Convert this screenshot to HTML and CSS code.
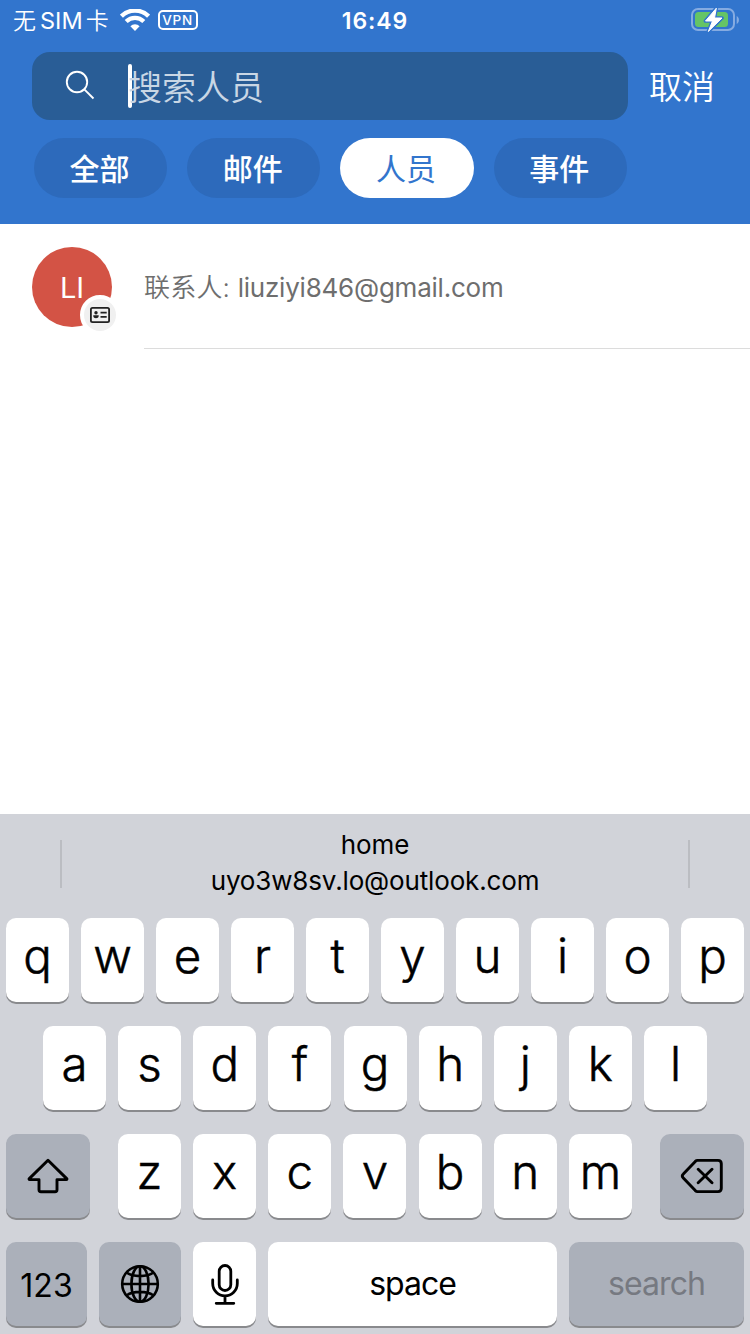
FILE: index.html
```html
<!DOCTYPE html>
<html lang="zh-CN">
<head>
<meta charset="utf-8">
<title>搜索人员</title>
<link rel="stylesheet" href="styles.css">
</head>
<body>
<div class="screen">
  <header class="header">
    <div class="status">
      <div class="status-left">
        <span class="carrier">无<span class="sim">SIM</span>卡</span>
        <svg class="wifi" width="30" height="22" viewBox="0 0 30 22">
          <path d="M1.400 7.200a19.300 19.300 0 0 1 27.200 0" fill="none" stroke="#fff" stroke-width="4.400"/>
          <path d="M6.200 12.500a12.500 12.500 0 0 1 17.600 0" fill="none" stroke="#fff" stroke-width="4.200"/>
          <path d="M15 22l-4.600-4.800a6.500 6.500 0 0 1 9.200 0z" fill="#fff"/>
        </svg>
        <span class="vpn">VPN</span>
      </div>
      <span class="time">16:49</span>
      <svg class="battery" width="50" height="26" viewBox="0 0 50 26">
        <rect x="2" y="2" width="42" height="21" rx="6" fill="none" stroke="#85abe1" stroke-width="2"/>
        <path d="M46.700 9v8c3-1.500 3-6.500 0-8z" fill="#85abe1"/>
        <rect x="5" y="5" width="33" height="15" rx="3.500" fill="#65c466"/>
        <path d="M26.300 1.200 15.500 14h7L18.300 24.500 32 11h-7.500z" fill="#fff" stroke="#3275cd" stroke-width="3.600" stroke-linejoin="round"/>
        <path d="M26.300 1.200 15.500 14h7L18.300 24.500 32 11h-7.500z" fill="#fff" stroke="#fff" stroke-width="1" stroke-linejoin="round"/>
      </svg>
    </div>
    <div class="search-row">
      <div class="field">
        <svg class="lens" width="30" height="30" viewBox="0 0 30 30" fill="none" stroke="#fff" stroke-width="1.900">
          <circle cx="12" cy="12" r="10.200"/><path d="M19.300 19.300 28.500 28.500"/>
        </svg>
        <span class="caret"></span>
        <span class="placeholder">搜索人员</span>
      </div>
      <span class="cancel">取消</span>
    </div>
    <nav class="tabs">
      <span class="tab">全部</span>
      <span class="tab">邮件</span>
      <span class="tab tab-active">人员</span>
      <span class="tab">事件</span>
    </nav>
  </header>
  <main class="results">
    <div class="result">
      <div class="avatar">LI
        <span class="badge">
          <svg width="20" height="16" viewBox="0 0 20 16">
            <rect x=".9" y=".9" width="18.200" height="14.200" rx="1.600" fill="none" stroke="#212121" stroke-width="1.800"/>
            <circle cx="6" cy="5.700" r="1.700" fill="#212121"/>
            <path d="M3.300 8.300h5.400v.8c0 3-5.400 3-5.400 0zM10.500 4.800h6.200v1.800h-6.200zM10.500 9h6.200v1.800h-6.200z" fill="#212121"/>
          </svg>
        </span>
      </div>
      <div class="contact"><span class="contact-label">联系人: </span><span class="mail">liuziyi846@gmail.com</span></div>
    </div>
  </main>
  <section class="keyboard">
    <div class="suggestions">
      <span class="divider"></span>
      <div class="suggestion"><span class="sug-name">home</span><span class="sug-mail">uyo3w8sv.lo@outlook.com</span></div>
      <span class="divider"></span>
    </div>
    <div class="rows">
      <div class="row"><span class="key">q</span><span class="key">w</span><span class="key">e</span><span class="key">r</span><span class="key">t</span><span class="key">y</span><span class="key">u</span><span class="key">i</span><span class="key">o</span><span class="key">p</span></div>
      <div class="row row-inset"><span class="key">a</span><span class="key">s</span><span class="key">d</span><span class="key">f</span><span class="key">g</span><span class="key">h</span><span class="key">j</span><span class="key">k</span><span class="key">l</span></div>
      <div class="row">
        <span class="key key-dark key-mod">
          <svg width="42" height="36" viewBox="0 0 42 36" fill="none" stroke="#000" stroke-width="2.900" stroke-linejoin="round"><path d="M21 2.300 2.300 20.600c-.5.500-.3 1 .4 1h9.300v10.200q0 2 2 2h14q2 0 2-2V21.600h9.300c.7 0 .9-.5.4-1z"/></svg>
        </span>
        <div class="letters"><span class="key">z</span><span class="key">x</span><span class="key">c</span><span class="key">v</span><span class="key">b</span><span class="key">n</span><span class="key">m</span></div>
        <span class="key key-dark key-mod">
          <svg width="44" height="36" viewBox="0 0 44 36" fill="none" stroke="#000" stroke-width="2.900" stroke-linejoin="round" stroke-linecap="round"><path d="M17.500 2.400h20.500q3.300 0 3.300 3.300v24.600q0 3.300-3.300 3.300h-20.500q-1.200 0-2.200-1L3.300 20q-2-2 0-4L15.300 3.400q1-1 2.200-1zM18.200 11.300 32 24.700M32 11.300 18.200 24.700"/></svg>
        </span>
      </div>
      <div class="row">
        <span class="key key-dark key-num">123</span>
        <span class="key key-dark key-globe">
          <svg width="40" height="40" viewBox="0 0 40 40" fill="none" stroke="#000" stroke-width="2.600"><circle cx="20" cy="20" r="17.800"/><ellipse cx="20" cy="20" rx="8.600" ry="17.800"/><path d="M20 2v36M2 20h36M6.800 8.800C13 13.200 27 13.200 33.200 8.800M6.800 31.200C13 26.800 27 26.800 33.200 31.200"/></svg>
        </span>
        <span class="key">
          <svg width="28" height="42" viewBox="0 0 28 42" fill="none" stroke="#000" stroke-width="2.800" stroke-linecap="round"><rect x="8.200" y="2.500" width="11.600" height="25" rx="5.800"/><path d="M1.700 17v3.500a12.300 12.300 0 0 0 24.600 0V17M14 33v7.300M5.200 40.300h17.600"/></svg>
        </span>
        <span class="key key-space">space</span>
        <span class="key key-dark key-search">search</span>
      </div>
    </div>
  </section>
</div>
</body>
</html>
```
FILE: styles.css
```css
* { box-sizing: border-box; }
body { margin: 0; font-family: Inter, "Noto Sans CJK SC", sans-serif; }
.screen { width: 750px; height: 1334px; display: flex; flex-direction: column; background: #fff; overflow: hidden; }
.header { height: 224px; background: #3275cd; color: #fff; display: flex; flex-direction: column; }
.status { height: 40px; display: grid; grid-template-columns: 1fr auto 1fr; grid-template-rows: 40px; align-items: center; padding: 0 10px 0 13px; }
.status-left { display: flex; align-items: center; height: 40px; }
.carrier { font-size: 23px; line-height: 42px; height: 40px; font-weight: 350; display: flex; }
.sim { margin: 0 3px 0 4px; font-weight: 400; font-size: 23.500px; }
.wifi { margin-left: 11px; }
.vpn { margin-left: 8px; width: 40px; height: 20px; border: 2px solid #fff; border-radius: 5px; font-size: 13.500px; font-weight: 500; line-height: 16px; text-align: center; letter-spacing: .8px; }
.time { font-size: 23px; font-weight: 600; line-height: 42px; height: 40px; letter-spacing: .9px; margin-right: 3px; }
.battery { justify-self: end; }
.search-row { display: flex; align-items: center; margin-top: 12px; padding-left: 32px; }
.field { width: 596px; height: 68px; border-radius: 18px; background: #295d96; display: flex; align-items: center; padding-left: 33px; }
.lens { margin-bottom: 2px; }
.caret { width: 4px; height: 44px; border-radius: 2px; background: #fff; margin-left: 33px; }
.placeholder { font-size: 34px; line-height: 68px; font-weight: 350; color: #c9d7e5; margin: 3px 0 0 -4px; height: 68px; }
.cancel { font-size: 33px; line-height: 68px; height: 68px; margin: 1px 0 -1px 21px; font-weight: 350; }
.tabs { display: flex; gap: 20px; margin: 18px 0 0 34px; }
.tab { width: 133.200px; height: 60px; padding-right: 2px; border-radius: 30px; background: #2d6abb; font-size: 30px; line-height: 62px; font-weight: 500; text-align: center; }
.tab-active { background: #fff; color: #3275cd; font-weight: 400; }
.results { flex: 1; }
.result { display: flex; padding-left: 32px; height: 125px; }
.avatar { position: relative; width: 80px; height: 80px; margin-top: 23px; border-radius: 50%; background: #d35345; color: #fff; font-size: 29px; font-weight: 400; line-height: 81px; text-align: center; }
.badge { position: absolute; left: 48px; top: 48px; width: 40px; height: 40px; border: 4px solid #fff; border-radius: 50%; background: #f0f0f0; display: flex; align-items: center; justify-content: center; }
.contact { flex: 1; margin-left: 32px; border-bottom: 1px solid #dcdcdc; color: #6e6e6e; font-size: 26px; line-height: 127px; white-space: pre; }
.contact-label { font-weight: 350; letter-spacing: .2px; }
.mail { letter-spacing: -.22px; }
.keyboard { height: 520px; background: #d1d3d9; display: flex; flex-direction: column; }
.suggestions { height: 104px; display: flex; justify-content: space-between; align-items: flex-start; padding: 0 60px; }
.divider { width: 2px; height: 48px; margin-top: 26px; background: #bbbdc2; }
.suggestion { display: flex; flex-direction: column; align-items: center; padding-top: 13px; font-size: 26px; line-height: 36px; letter-spacing: -.15px; }
.rows { display: flex; flex-direction: column; gap: 24px; padding: 0 6px; }
.row { display: flex; justify-content: space-between; height: 84px; }
.row-inset { padding: 0 37px; }
.letters { display: flex; width: 514px; justify-content: space-between; }
.key { width: 63px; height: 84px; border-radius: 10px; background: #fff; box-shadow: 0 2px 0 #898a8d; font-size: 47.500px; line-height: 75px; font-weight: 300; -webkit-text-stroke: .5px #000; display: flex; justify-content: center; }
.key svg { align-self: center; }
.key-dark { background: #abb0ba; }
.key-mod { width: 84px; }
.key-num, .key-space, .key-search { font-size: 32px; font-weight: 400; -webkit-text-stroke: 0; }
.key-num { width: 81px; line-height: 87px; }
.key-globe { width: 82px; }
.key-space { width: 289px; line-height: 83px; letter-spacing: -1px; }
.key-search { width: 175px; line-height: 83px; letter-spacing: -.9px; color: #767981; }
```
